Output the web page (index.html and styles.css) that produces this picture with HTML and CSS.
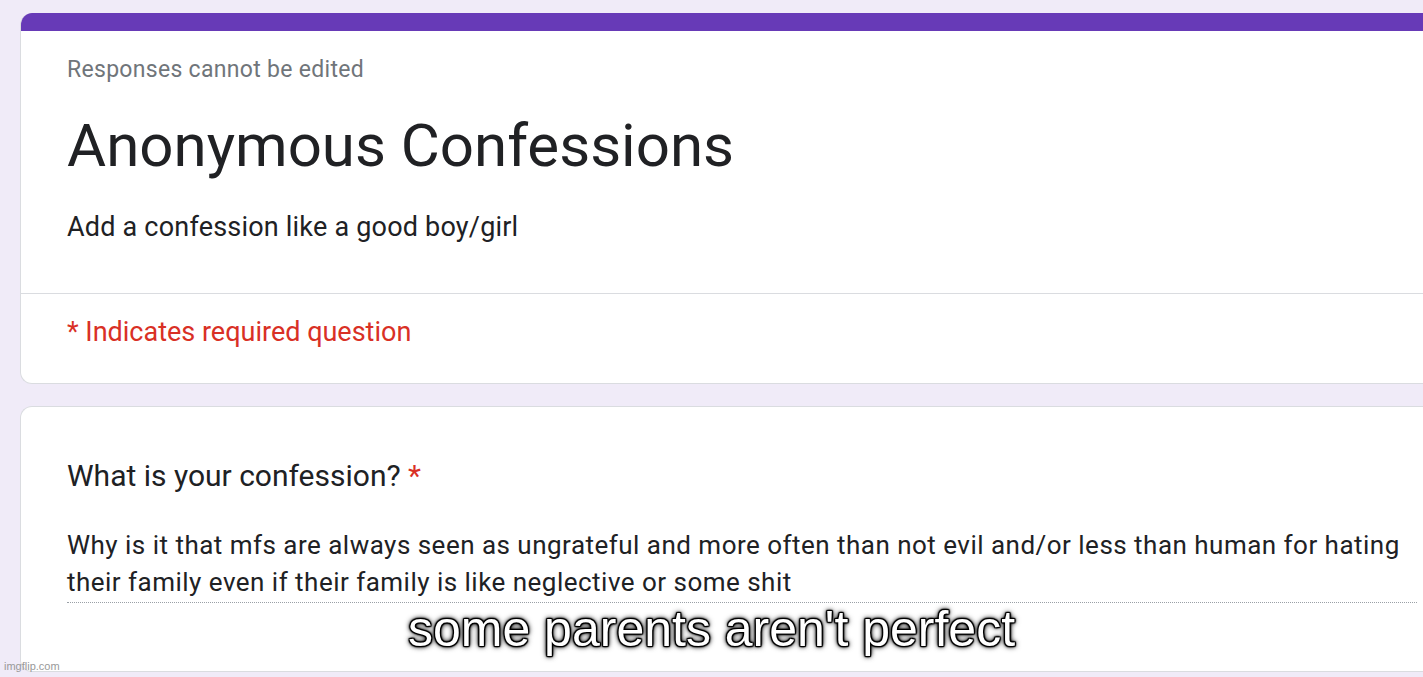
FILE: index.html
```html
<!DOCTYPE html>
<html>
<head>
<meta charset="utf-8">
<link rel="stylesheet" href="styles.css">
</head>
<body>
<div class="page">
  <div class="card header-card">
    <div class="bar"></div>
    <div class="header-top">
      <div class="note">Responses cannot be edited</div>
      <h1 class="title">Anonymous Confessions</h1>
      <div class="desc">Add a confession like a good boy/girl</div>
    </div>
    <div class="required">* Indicates required question</div>
  </div>
  <div class="card question-card">
    <div class="question">What is your confession? <span class="star">*</span></div>
    <div class="answer">Why is it that mfs are always seen as ungrateful and more often than not evil and/or less than human for hating their family even if their family is like neglective or some shit</div>
  </div>
</div>
<div class="caption">some parents aren't perfect</div>
<div class="watermark">imgflip.com</div>
</body>
</html>
```
FILE: styles.css
```css
html, body {
  margin: 0;
  padding: 0;
  height: 100%;
  overflow: hidden;
}
body {
  background: #f0ebf8;
  font-family: Roboto, "Liberation Sans", Arial, sans-serif;
  position: relative;
}
.page {
  padding: 13px 0 0 20px;
  display: flex;
  flex-direction: column;
  gap: 22px;
}
.card {
  background: #fff;
  border: 1px solid #dadce0;
  border-right: none;
  border-radius: 12px 0 0 12px;
}
.header-card {
  overflow: hidden;
  border-top: none;
}
.bar {
  height: 18px;
  background: #673ab7;
}
.header-top {
  padding: 24px 46px 48px 46px;
  border-bottom: 1px solid #dadce0;
}
.note {
  font-size: 23px;
  line-height: 30px;
  letter-spacing: 0.3px;
  color: #70757a;
}
.title {
  margin: 25px 0 0 0;
  font-weight: 400;
  font-size: 60px;
  line-height: 72px;
  color: #202124;
}
.desc {
  margin-top: 27px;
  font-size: 27px;
  line-height: 36px;
  letter-spacing: 0.2px;
  color: #202124;
}
.required {
  padding: 20px 46px 33px 46px;
  font-size: 27px;
  line-height: 36px;
  color: #d93025;
}
.question-card {
  padding: 51px 6px 0 46px;
  height: 266px;
  box-sizing: border-box;
}
.question {
  font-size: 30px;
  line-height: 36px;
  color: #202124;
}
.star {
  color: #d93025;
}
.answer {
  margin-top: 33px;
  font-size: 26px;
  line-height: 37px;
  letter-spacing: 0.48px;
  color: #202124;
  padding-bottom: 1px;
  border-bottom: 1px dotted #9aa0a6;
}
.caption {
  position: absolute;
  left: 0;
  right: 0;
  top: 599px;
  text-align: center;
  font-family: "Liberation Sans", Arial, sans-serif;
  font-size: 50px;
  line-height: 60px;
  color: #fff;
  text-shadow:
    1px 0 1px #000, -1px 0 1px #000, 0 1px 1px #000, 0 -1px 1px #000,
    1px 1px 1px #000, -1px -1px 1px #000, 1px -1px 1px #000, -1px 1px 1px #000,
    0 0 3px #000, 0 0 5px #000, 0 0 6px rgba(0,0,0,0.8);
}
.watermark {
  position: absolute;
  left: 4px;
  top: 659px;
  font-family: "Liberation Sans", Arial, sans-serif;
  font-size: 11px;
  line-height: 14px;
  color: #999;
}
```
